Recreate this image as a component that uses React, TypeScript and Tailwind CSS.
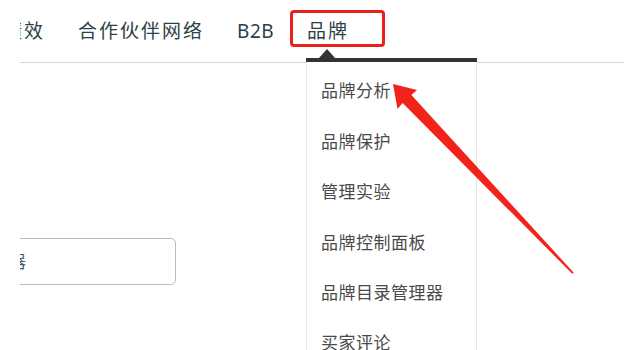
import React from "react";

const menuItems = ["品牌分析", "品牌保护", "管理实验", "品牌控制面板", "品牌目录管理器", "买家评论"];

function Arrow() {
  return (
    <svg className="pointer-events-none absolute left-0 top-0" width="624" height="350" viewBox="0 0 624 350">
      <polygon
        points="393,84 417,90 411.4,94.9 574,273 572,273.5 402.6,103.1 397.5,109"
        fill="#f2231b"
      />
    </svg>
  );
}

export default function App() {
  return (
    <div
      className="relative h-[350px] w-[624px] overflow-hidden bg-white"
      style={{ fontFamily: '"Noto Sans", "Noto Sans CJK SC", sans-serif' }}
    >
      <div className="relative ml-[20px] h-full overflow-hidden">
        {/* top nav */}
        <nav className="-ml-[17px] flex h-[63px] items-center gap-[33px] border-b border-[#d4d4d4] text-[19px] tracking-[2px] text-[#2f3f47]">
          <span>绩效</span>
          <span>合作伙伴网络</span>
          <span className="tracking-[0.5px]">B2B</span>
          <span className="relative">
            品牌
            <span className="absolute -left-[17px] -top-[7px] h-[37px] w-[95px] rounded-[4px] border-[3px] border-[#ea2119]" />
          </span>
        </nav>

        {/* input */}
        <div className="-ml-[40px] mt-[175px] flex h-[47px] w-[196px] items-center rounded-[5px] border-[1.5px] border-[#bdbdbd] pl-[28px] text-[17px] text-[#4a5a6a]">
          器
        </div>

        {/* dropdown */}
        <div className="absolute left-[286px] top-[58px] w-[171px]">
          <div className="absolute -top-[9px] left-[13px] h-0 w-0 border-x-[8px] border-b-[9px] border-x-transparent border-b-[#333333]" />
          <div className="h-[4px] bg-[#333333]" />
          <div className="border-x border-[#e6e6e6] bg-white pt-[4px] pb-[20px]">
            {menuItems.map((item) => (
              <div
                key={item}
                className="flex h-[50.4px] items-center pl-[14px] text-[17px] tracking-[0.5px] text-[#4a4a4a]"
              >
                {item}
              </div>
            ))}
          </div>
        </div>
      </div>
      <Arrow />
    </div>
  );
}
